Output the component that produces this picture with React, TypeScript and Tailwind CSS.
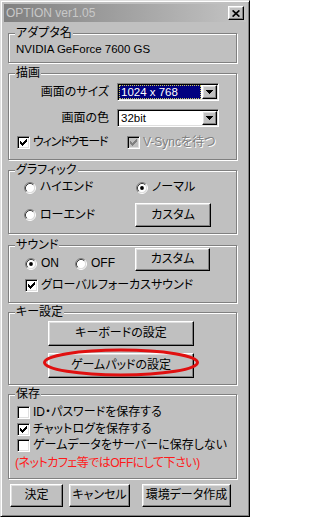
import React from "react";

const RAISED =
  "border border-t-white border-l-white border-r-black border-b-black bg-[#c0c0c0] shadow-[inset_-1px_-1px_0_#808080,inset_1px_1px_0_#dfdfdf]";
const SUNKEN =
  "border border-t-[#808080] border-l-[#808080] border-r-white border-b-white shadow-[inset_1px_1px_0_#000,inset_-1px_-1px_0_#dfdfdf]";

function Check({ checked = false, disabled = false }: { checked?: boolean; disabled?: boolean }) {
  return (
    <div
      className={
        SUNKEN +
        " w-[13px] h-[13px] shrink-0 flex items-center justify-center " +
        (disabled ? "bg-[#c0c0c0]" : "bg-white")
      }
    >
      {checked && (
        <svg width="7" height="7" viewBox="0 0 7 7" shapeRendering="crispEdges">
          <path
            d="M6 0h1v1h-1z M5 1h2v1h-2z M0 2h1v1h-1z M4 2h3v1h-3z M0 3h2v1h-2z M3 3h3v1h-3z M0 4h5v1h-5z M1 5h3v1h-3z M2 6h1v1h-1z"
            fill={disabled ? "#808080" : "#000"}
          />
        </svg>
      )}
    </div>
  );
}

function Radio({ checked = false }: { checked?: boolean }) {
  return (
    <svg width="12" height="12" viewBox="0 0 12 12" className="shrink-0">
      <circle cx="6" cy="6" r="4.5" fill="#fff" />
      <path d="M2.11 9.89 A5.5 5.5 0 0 1 9.89 2.11" stroke="#808080" strokeWidth="1" fill="none" />
      <path d="M9.89 2.11 A5.5 5.5 0 0 1 2.11 9.89" stroke="#fff" strokeWidth="1" fill="none" />
      <path d="M2.82 9.18 A4.5 4.5 0 0 1 9.18 2.82" stroke="#404040" strokeWidth="1" fill="none" />
      <path d="M9.18 2.82 A4.5 4.5 0 0 1 2.82 9.18" stroke="#dfdfdf" strokeWidth="1" fill="none" />
      {checked && <circle cx="6" cy="6" r="1.9" fill="#000" />}
    </svg>
  );
}

function Group({
  label,
  className,
  children,
}: {
  label?: string;
  className: string;
  children: React.ReactNode;
}) {
  return (
    <div
      className={
        "ml-[4px] w-[229px] border border-[#808080] shadow-[inset_1px_1px_0_#fff,1px_1px_0_#fff] " +
        className
      }
    >
      {label && (
        <div className="-mt-[7px] ml-[6px] w-fit h-[13px] bg-[#c0c0c0] px-[1px] leading-[13px]">
          {label}
        </div>
      )}
      {children}
    </div>
  );
}

function Select({ value, selected = false }: { value: string; selected?: boolean }) {
  return (
    <div className={SUNKEN + " bg-white w-[102px] h-[18px] flex items-start p-[1px]"}>
      <div className="flex-1 h-[14px] flex items-center">
        {selected ? (
          <div className="ml-0 w-[82px] h-[14px] bg-[#000080] text-white border border-dotted border-[#c8c860] flex items-center pl-[1px] leading-[12px]">
            {value}
          </div>
        ) : (
          <div className="pl-[2px] leading-[14px]">{value}</div>
        )}
      </div>
      <div className={RAISED + " w-[15px] h-[14px] flex items-center justify-center"}>
        <svg width="7" height="4" viewBox="0 0 7 4" shapeRendering="crispEdges">
          <path d="M0 0h7v1h-7z M1 1h5v1h-5z M2 2h3v1h-3z M3 3h1v1h-1z" fill="#000" />
        </svg>
      </div>
    </div>
  );
}

function Btn({ className, children }: { className: string; children: React.ReactNode }) {
  return (
    <div className={RAISED + " flex items-center justify-center leading-[13px] " + className}>
      {children}
    </div>
  );
}

export default function App() {
  return (
    <div className="w-[250px] h-[517px] bg-[#c0c0c0] text-black text-[12px] leading-[13px] font-['Liberation_Sans','Noto_Sans_CJK_JP',sans-serif] [font-feature-settings:'palt'] border border-t-[#dfdfdf] border-l-[#dfdfdf] border-r-black border-b-black shadow-[inset_1px_1px_0_#fff,inset_-1px_-1px_0_#808080] p-[3px] flex flex-col overflow-hidden">
      {/* Title bar */}
      <div className="h-[18px] w-full shrink-0 flex items-center justify-between bg-linear-to-r from-[#808080] to-[#c4c4c4]">
        <span className="pl-[2px] text-[#c8c8c8] text-[12px] leading-[14px]">OPTION ver1.05</span>
        <div className={RAISED + " w-[16px] h-[14px] mr-[2px] flex items-center justify-center"}>
          <svg width="8" height="7" viewBox="0 0 8 7">
            <path d="M0.6 0.4 L7.4 6.6 M7.4 0.4 L0.6 6.6" stroke="#000" strokeWidth="1.7" />
          </svg>
        </div>
      </div>

      {/* Adapter */}
      <Group label="アダプタ名" className="mt-[11px] pb-[6px]">
        <div className="mt-[3px] h-[13px] pl-[7px] text-[11.5px]">NVIDIA GeForce 7600 GS</div>
      </Group>

      {/* 描画 */}
      <Group label="描画" className="mt-[10px] pb-[10px]">
        <div className="mt-[3px] flex items-center h-[18px]">
          <div className="w-[100px] text-right">画面のサイズ</div>
          <div className="ml-[8px] text-[11.5px]">
            <Select value="1024 x 768" selected />
          </div>
        </div>
        <div className="mt-[8px] flex items-center h-[18px]">
          <div className="w-[100px] text-right">画面の色</div>
          <div className="ml-[8px] text-[11.5px]">
            <Select value="32bit" />
          </div>
        </div>
        <div className="mt-[9px] flex items-center h-[13px] ml-[8px]">
          <div className="w-[110px] flex items-center gap-[3px]">
            <Check checked />
            <span className="tracking-[-1.2px]">ウィンドウモード</span>
          </div>
          <div className="flex items-center gap-[3px]">
            <Check checked disabled />
            <span className="text-[#808080] [text-shadow:1px_1px_0_#fff]">V-Syncを待つ</span>
          </div>
        </div>
      </Group>

      {/* グラフィック */}
      <Group label="グラフィック" className="mt-[10px] pb-[6px]">
        <div className="mt-[4px] h-[13px] flex items-center pl-[15px]">
          <div className="w-[112px] flex items-center gap-[4px]">
            <Radio />
            <span>ハイエンド</span>
          </div>
          <div className="flex items-center gap-[4px]">
            <Radio checked />
            <span>ノーマル</span>
          </div>
        </div>
        <div className="mt-[9px] h-[24px] flex items-center pl-[15px]">
          <div className="w-[111px] flex items-center gap-[4px]">
            <Radio />
            <span>ローエンド</span>
          </div>
          <Btn className="w-[76px] h-[24px]">カスタム</Btn>
        </div>
      </Group>

      {/* サウンド */}
      <Group className="mt-[11px] pb-[10px]">
        <div className="-mt-[7px] flex items-start">
          <div className="w-[126px] flex flex-col">
            <div className="ml-[6px] w-fit h-[13px] bg-[#c0c0c0] px-[1px] leading-[13px]">サウンド</div>
            <div className="mt-[5px] ml-[16px] h-[13px] flex items-center">
              <div className="w-[50px] flex items-center gap-[4px]">
                <Radio checked />
                <span>ON</span>
              </div>
              <div className="flex items-center gap-[4px]">
                <Radio />
                <span>OFF</span>
              </div>
            </div>
          </div>
          <Btn className="mt-[9px] w-[75px] h-[23px]">カスタム</Btn>
        </div>
        <div className="mt-[8px] h-[13px] ml-[16px] flex items-center gap-[3px]">
          <Check checked />
          <span>グローバルフォーカスサウンド</span>
        </div>
      </Group>

      {/* キー設定 */}
      <Group label="キー設定" className="mt-[9px] pb-[6px]">
        <Btn className="mt-[2px] ml-[39px] w-[146px] h-[25px]">キーボードの設定</Btn>
        <div className="relative mt-[7px] ml-[39px] w-[146px] h-[25px]">
          <Btn className="w-[146px] h-[25px]">ゲームパッドの設定</Btn>
          <svg
            className="absolute left-[-6px] top-[-5px] pointer-events-none"
            width="158"
            height="30"
            viewBox="0 0 158 30"
          >
            <ellipse cx="79" cy="14.5" rx="76.5" ry="12.5" fill="none" stroke="#e01010" strokeWidth="3" />
          </svg>
        </div>
      </Group>

      {/* 保存 */}
      <Group label="保存" className="mt-[9px] pb-[8px]">
        <div className="mt-[5px] h-[13px] ml-[8px] flex items-center gap-[3px]">
          <Check />
          <span>ID・パスワードを保存する</span>
        </div>
        <div className="mt-[4px] h-[13px] ml-[8px] flex items-center gap-[3px]">
          <Check checked />
          <span>チャットログを保存する</span>
        </div>
        <div className="mt-[3px] h-[13px] ml-[8px] flex items-center gap-[3px]">
          <Check />
          <span>ゲームデータをサーバーに保存しない</span>
        </div>
        <div className="mt-[5px] h-[13px] ml-[6px] text-[#ff1a1a] tracking-[-0.5px]">
          (ネットカフェ等ではOFFにして下さい)
        </div>
      </Group>

      {/* Bottom buttons */}
      <div className="mt-[5px] flex items-center">
        <Btn className="ml-[6px] w-[53px] h-[23px]">決定</Btn>
        <Btn className="ml-[6px] w-[61px] h-[23px]">キャンセル</Btn>
        <Btn className="ml-[12px] w-[89px] h-[23px]">環境データ作成</Btn>
      </div>
    </div>
  );
}
